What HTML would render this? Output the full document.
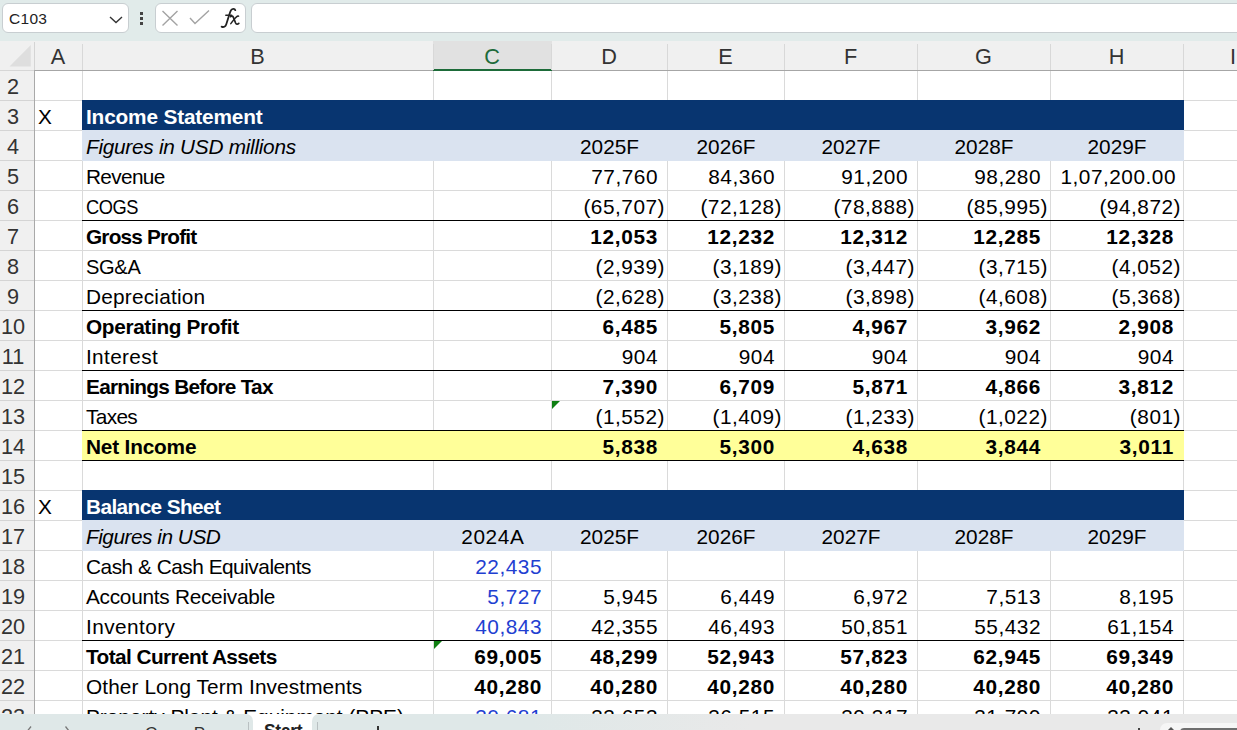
<!DOCTYPE html>
<html><head><meta charset="utf-8"><style>
*{margin:0;padding:0;box-sizing:border-box}
html,body{width:1237px;height:730px;overflow:hidden;background:#fff}
body{position:relative;font-family:"Liberation Sans",sans-serif;color:#000}
.a{position:absolute}
.t{position:absolute;white-space:nowrap;font-size:20.8px;line-height:30px;height:30px}
.n{letter-spacing:0.52px}
.nb{letter-spacing:0.7px}
.r{text-align:right}
.c{text-align:center}
.b{font-weight:bold}
.i{font-style:italic}
.hl{position:absolute;height:1px;background:#dadada}
.vl{position:absolute;width:1px;background:#dadada}
.bl{position:absolute;height:1px;background:#000}
.hd{position:absolute;font-size:21.7px;color:#333;text-align:center;line-height:29px;top:41.5px;height:29px}
.rh{position:absolute;font-size:21.7px;color:#333;text-align:center;left:0;width:26px;line-height:30px;height:30px;margin-top:1.5px}
</style></head><body>
<div class="hl" style="left:35px;top:100px;width:1202px"></div>
<div class="hl" style="left:35px;top:130px;width:1202px"></div>
<div class="hl" style="left:35px;top:160px;width:1202px"></div>
<div class="hl" style="left:35px;top:190px;width:1202px"></div>
<div class="hl" style="left:35px;top:220px;width:1202px"></div>
<div class="hl" style="left:35px;top:250px;width:1202px"></div>
<div class="hl" style="left:35px;top:280px;width:1202px"></div>
<div class="hl" style="left:35px;top:310px;width:1202px"></div>
<div class="hl" style="left:35px;top:340px;width:1202px"></div>
<div class="hl" style="left:35px;top:370px;width:1202px"></div>
<div class="hl" style="left:35px;top:400px;width:1202px"></div>
<div class="hl" style="left:35px;top:430px;width:1202px"></div>
<div class="hl" style="left:35px;top:460px;width:1202px"></div>
<div class="hl" style="left:35px;top:490px;width:1202px"></div>
<div class="hl" style="left:35px;top:520px;width:1202px"></div>
<div class="hl" style="left:35px;top:550px;width:1202px"></div>
<div class="hl" style="left:35px;top:580px;width:1202px"></div>
<div class="hl" style="left:35px;top:610px;width:1202px"></div>
<div class="hl" style="left:35px;top:640px;width:1202px"></div>
<div class="hl" style="left:35px;top:670px;width:1202px"></div>
<div class="hl" style="left:35px;top:700px;width:1202px"></div>
<div class="hl" style="left:35px;top:730px;width:1202px"></div>
<div class="vl" style="left:82px;top:71px;height:643px"></div>
<div class="vl" style="left:433px;top:71px;height:643px"></div>
<div class="vl" style="left:551px;top:71px;height:643px"></div>
<div class="vl" style="left:667px;top:71px;height:643px"></div>
<div class="vl" style="left:784px;top:71px;height:643px"></div>
<div class="vl" style="left:917px;top:71px;height:643px"></div>
<div class="vl" style="left:1050px;top:71px;height:643px"></div>
<div class="vl" style="left:1183px;top:71px;height:643px"></div>
<div class="a" style="left:82px;top:100px;width:1102px;height:31px;background:#083570"></div>
<div class="a" style="left:82px;top:130px;width:1102px;height:31px;background:#dae3f0"></div>
<div class="a" style="left:82px;top:430px;width:1102px;height:31px;background:#ffff99"></div>
<div class="a" style="left:82px;top:490px;width:1102px;height:31px;background:#083570"></div>
<div class="a" style="left:82px;top:520px;width:1102px;height:31px;background:#dae3f0"></div>
<div class="bl" style="left:82px;top:220px;width:1102px"></div>
<div class="bl" style="left:82px;top:310px;width:1102px"></div>
<div class="bl" style="left:82px;top:370px;width:1102px"></div>
<div class="bl" style="left:82px;top:430px;width:1102px"></div>
<div class="bl" style="left:82px;top:460px;width:1102px"></div>
<div class="bl" style="left:82px;top:640px;width:1102px"></div>
<div class="t " style="left:38px;top:102px;">X</div>
<div class="t b" style="left:86px;top:102px;letter-spacing:-0.160px;color:#fff;">Income Statement</div>
<div class="t i" style="left:86px;top:132px;letter-spacing:-0.273px;">Figures in USD millions</div>
<div class="t c " style="left:552px;width:115px;top:132px;">2025F</div>
<div class="t c " style="left:668px;width:116px;top:132px;">2026F</div>
<div class="t c " style="left:785px;width:132px;top:132px;">2027F</div>
<div class="t c " style="left:918px;width:132px;top:132px;">2028F</div>
<div class="t c " style="left:1051px;width:132px;top:132px;">2029F</div>
<div class="t " style="left:86px;top:162px;letter-spacing:-0.667px;">Revenue</div>
<div class="t r n " style="left:552px;width:106px;top:162px;">77,760</div>
<div class="t r n " style="left:668px;width:107px;top:162px;">84,360</div>
<div class="t r n " style="left:785px;width:123px;top:162px;">91,200</div>
<div class="t r n " style="left:918px;width:123px;top:162px;">98,280</div>
<div class="t r n " style="left:1051px;width:125px;top:162px;">1,07,200.00</div>
<div class="t " style="left:86px;top:192px;letter-spacing:-0.467px;transform:scaleX(0.878);transform-origin:0 0;">COGS</div>
<div class="t r n " style="left:552px;width:113px;top:192px;">(65,707)</div>
<div class="t r n " style="left:668px;width:114px;top:192px;">(72,128)</div>
<div class="t r n " style="left:785px;width:130px;top:192px;">(78,888)</div>
<div class="t r n " style="left:918px;width:130px;top:192px;">(85,995)</div>
<div class="t r n " style="left:1051px;width:130px;top:192px;">(94,872)</div>
<div class="t b" style="left:86px;top:222px;letter-spacing:-0.818px;">Gross Profit</div>
<div class="t r nb b" style="left:552px;width:106px;top:222px;">12,053</div>
<div class="t r nb b" style="left:668px;width:107px;top:222px;">12,232</div>
<div class="t r nb b" style="left:785px;width:123px;top:222px;">12,312</div>
<div class="t r nb b" style="left:918px;width:123px;top:222px;">12,285</div>
<div class="t r nb b" style="left:1051px;width:123px;top:222px;">12,328</div>
<div class="t " style="left:86px;top:252px;letter-spacing:-0.333px;transform:scaleX(0.965);transform-origin:0 0;">SG&amp;A</div>
<div class="t r n " style="left:552px;width:113px;top:252px;">(2,939)</div>
<div class="t r n " style="left:668px;width:114px;top:252px;">(3,189)</div>
<div class="t r n " style="left:785px;width:130px;top:252px;">(3,447)</div>
<div class="t r n " style="left:918px;width:130px;top:252px;">(3,715)</div>
<div class="t r n " style="left:1051px;width:130px;top:252px;">(4,052)</div>
<div class="t " style="left:86px;top:282px;letter-spacing:0.218px;">Depreciation</div>
<div class="t r n " style="left:552px;width:113px;top:282px;">(2,628)</div>
<div class="t r n " style="left:668px;width:114px;top:282px;">(3,238)</div>
<div class="t r n " style="left:785px;width:130px;top:282px;">(3,898)</div>
<div class="t r n " style="left:918px;width:130px;top:282px;">(4,608)</div>
<div class="t r n " style="left:1051px;width:130px;top:282px;">(5,368)</div>
<div class="t b" style="left:86px;top:312px;letter-spacing:-0.347px;">Operating Profit</div>
<div class="t r nb b" style="left:552px;width:106px;top:312px;">6,485</div>
<div class="t r nb b" style="left:668px;width:107px;top:312px;">5,805</div>
<div class="t r nb b" style="left:785px;width:123px;top:312px;">4,967</div>
<div class="t r nb b" style="left:918px;width:123px;top:312px;">3,962</div>
<div class="t r nb b" style="left:1051px;width:123px;top:312px;">2,908</div>
<div class="t " style="left:86px;top:342px;letter-spacing:0.343px;">Interest</div>
<div class="t r n " style="left:552px;width:106px;top:342px;">904</div>
<div class="t r n " style="left:668px;width:107px;top:342px;">904</div>
<div class="t r n " style="left:785px;width:123px;top:342px;">904</div>
<div class="t r n " style="left:918px;width:123px;top:342px;">904</div>
<div class="t r n " style="left:1051px;width:123px;top:342px;">904</div>
<div class="t b" style="left:86px;top:372px;letter-spacing:-0.733px;">Earnings Before Tax</div>
<div class="t r nb b" style="left:552px;width:106px;top:372px;">7,390</div>
<div class="t r nb b" style="left:668px;width:107px;top:372px;">6,709</div>
<div class="t r nb b" style="left:785px;width:123px;top:372px;">5,871</div>
<div class="t r nb b" style="left:918px;width:123px;top:372px;">4,866</div>
<div class="t r nb b" style="left:1051px;width:123px;top:372px;">3,812</div>
<div class="t " style="left:86px;top:402px;letter-spacing:-0.650px;">Taxes</div>
<div class="t r n " style="left:552px;width:113px;top:402px;">(1,552)</div>
<div class="t r n " style="left:668px;width:114px;top:402px;">(1,409)</div>
<div class="t r n " style="left:785px;width:130px;top:402px;">(1,233)</div>
<div class="t r n " style="left:918px;width:130px;top:402px;">(1,022)</div>
<div class="t r n " style="left:1051px;width:130px;top:402px;">(801)</div>
<div class="t b" style="left:86px;top:432px;letter-spacing:-0.178px;">Net Income</div>
<div class="t r nb b" style="left:552px;width:106px;top:432px;">5,838</div>
<div class="t r nb b" style="left:668px;width:107px;top:432px;">5,300</div>
<div class="t r nb b" style="left:785px;width:123px;top:432px;">4,638</div>
<div class="t r nb b" style="left:918px;width:123px;top:432px;">3,844</div>
<div class="t r nb b" style="left:1051px;width:123px;top:432px;">3,011</div>
<div class="t " style="left:38px;top:492px;">X</div>
<div class="t b" style="left:86px;top:492px;letter-spacing:-0.600px;color:#fff;">Balance Sheet</div>
<div class="t i" style="left:86px;top:522px;letter-spacing:-0.477px;">Figures in USD</div>
<div class="t c " style="left:434px;width:117px;top:522px;letter-spacing:0.6px;text-indent:0.6px">2024A</div>
<div class="t c " style="left:552px;width:115px;top:522px;">2025F</div>
<div class="t c " style="left:668px;width:116px;top:522px;">2026F</div>
<div class="t c " style="left:785px;width:132px;top:522px;">2027F</div>
<div class="t c " style="left:918px;width:132px;top:522px;">2028F</div>
<div class="t c " style="left:1051px;width:132px;top:522px;">2029F</div>
<div class="t " style="left:86px;top:552px;letter-spacing:-0.473px;">Cash &amp; Cash Equivalents</div>
<div class="t r n " style="left:434px;width:108px;top:552px;color:#1f3fd1;">22,435</div>
<div class="t " style="left:86px;top:582px;letter-spacing:-0.267px;">Accounts Receivable</div>
<div class="t r n " style="left:434px;width:108px;top:582px;color:#1f3fd1;">5,727</div>
<div class="t r n " style="left:552px;width:106px;top:582px;">5,945</div>
<div class="t r n " style="left:668px;width:107px;top:582px;">6,449</div>
<div class="t r n " style="left:785px;width:123px;top:582px;">6,972</div>
<div class="t r n " style="left:918px;width:123px;top:582px;">7,513</div>
<div class="t r n " style="left:1051px;width:123px;top:582px;">8,195</div>
<div class="t " style="left:86px;top:612px;letter-spacing:0.425px;">Inventory</div>
<div class="t r n " style="left:434px;width:108px;top:612px;color:#1f3fd1;">40,843</div>
<div class="t r n " style="left:552px;width:106px;top:612px;">42,355</div>
<div class="t r n " style="left:668px;width:107px;top:612px;">46,493</div>
<div class="t r n " style="left:785px;width:123px;top:612px;">50,851</div>
<div class="t r n " style="left:918px;width:123px;top:612px;">55,432</div>
<div class="t r n " style="left:1051px;width:123px;top:612px;">61,154</div>
<div class="t b" style="left:86px;top:642px;letter-spacing:-0.579px;">Total Current Assets</div>
<div class="t r nb b" style="left:434px;width:108px;top:642px;">69,005</div>
<div class="t r nb b" style="left:552px;width:106px;top:642px;">48,299</div>
<div class="t r nb b" style="left:668px;width:107px;top:642px;">52,943</div>
<div class="t r nb b" style="left:785px;width:123px;top:642px;">57,823</div>
<div class="t r nb b" style="left:918px;width:123px;top:642px;">62,945</div>
<div class="t r nb b" style="left:1051px;width:123px;top:642px;">69,349</div>
<div class="t " style="left:86px;top:672px;letter-spacing:0.100px;">Other Long Term Investments</div>
<div class="t r nb b" style="left:434px;width:108px;top:672px;">40,280</div>
<div class="t r nb b" style="left:552px;width:106px;top:672px;">40,280</div>
<div class="t r nb b" style="left:668px;width:107px;top:672px;">40,280</div>
<div class="t r nb b" style="left:785px;width:123px;top:672px;">40,280</div>
<div class="t r nb b" style="left:918px;width:123px;top:672px;">40,280</div>
<div class="t r nb b" style="left:1051px;width:123px;top:672px;">40,280</div>
<div class="t " style="left:86px;top:702px;letter-spacing:0.000px;">Property Plant &amp; Equipment (PPE)</div>
<div class="t r n " style="left:434px;width:108px;top:702px;color:#1f3fd1;">30,681</div>
<div class="t r n " style="left:552px;width:106px;top:702px;">33,653</div>
<div class="t r n " style="left:668px;width:107px;top:702px;">36,515</div>
<div class="t r n " style="left:785px;width:123px;top:702px;">39,317</div>
<div class="t r n " style="left:918px;width:123px;top:702px;">31,799</div>
<div class="t r n " style="left:1051px;width:123px;top:702px;">33,941</div>
<svg class="a" style="left:552px;top:401px" width="9" height="9"><path d="M0 0H8L0 8Z" fill="#0f7f12"/></svg>
<svg class="a" style="left:434px;top:641px" width="9" height="9"><path d="M0 0H8L0 8Z" fill="#0f7f12"/></svg>
<div class="a" style="left:0;top:41px;width:1237px;height:29px;background:#f0f0f0"></div>
<div class="a" style="left:34px;top:70px;width:1203px;height:1px;background:#a6a6a6"></div>
<div class="a" style="left:0;top:70px;width:34px;height:1px;background:#d0d0d0"></div>
<div class="a" style="left:433px;top:41px;width:119px;height:29px;background:#e1e1e1"></div>
<div class="a" style="left:433px;top:69px;width:119px;height:2px;background:#1d6b39"></div>
<div class="a" style="left:82px;top:44px;width:1px;height:26px;background:#d8d8d8"></div>
<div class="a" style="left:433px;top:44px;width:1px;height:26px;background:#d8d8d8"></div>
<div class="a" style="left:551px;top:44px;width:1px;height:26px;background:#d8d8d8"></div>
<div class="a" style="left:667px;top:44px;width:1px;height:26px;background:#d8d8d8"></div>
<div class="a" style="left:784px;top:44px;width:1px;height:26px;background:#d8d8d8"></div>
<div class="a" style="left:917px;top:44px;width:1px;height:26px;background:#d8d8d8"></div>
<div class="a" style="left:1050px;top:44px;width:1px;height:26px;background:#d8d8d8"></div>
<div class="a" style="left:1183px;top:44px;width:1px;height:26px;background:#d8d8d8"></div>
<div class="hd" style="left:34px;width:48px;color:#333">A</div>
<div class="hd" style="left:82px;width:351px;color:#333">B</div>
<div class="hd" style="left:433px;width:118px;color:#1e6b3b">C</div>
<div class="hd" style="left:551px;width:116px;color:#333">D</div>
<div class="hd" style="left:667px;width:117px;color:#333">E</div>
<div class="hd" style="left:784px;width:133px;color:#333">F</div>
<div class="hd" style="left:917px;width:133px;color:#333">G</div>
<div class="hd" style="left:1050px;width:133px;color:#333">H</div>
<div class="hd" style="left:1183px;width:100px">I</div>
<svg class="a" style="left:0;top:41px" width="34" height="29"><path d="M9.5 25.6H30.8V3.9Z" fill="#dedede"/></svg>
<div class="a" style="left:0;top:70px;width:34px;height:644px;background:#f0f0f0"></div>
<div class="a" style="left:34px;top:70px;width:1px;height:644px;background:#a9a9a9"></div>
<div class="a" style="left:34px;top:42px;width:1px;height:28px;background:#d4d4d4"></div>
<div class="a" style="left:0;top:70px;width:34px;height:1px;background:#d6d6d6"></div>
<div class="a" style="left:0;top:100px;width:34px;height:1px;background:#d4d4d4"></div>
<div class="rh" style="top:70px">2</div>
<div class="a" style="left:0;top:130px;width:34px;height:1px;background:#d4d4d4"></div>
<div class="rh" style="top:100px">3</div>
<div class="a" style="left:0;top:160px;width:34px;height:1px;background:#d4d4d4"></div>
<div class="rh" style="top:130px">4</div>
<div class="a" style="left:0;top:190px;width:34px;height:1px;background:#d4d4d4"></div>
<div class="rh" style="top:160px">5</div>
<div class="a" style="left:0;top:220px;width:34px;height:1px;background:#d4d4d4"></div>
<div class="rh" style="top:190px">6</div>
<div class="a" style="left:0;top:250px;width:34px;height:1px;background:#d4d4d4"></div>
<div class="rh" style="top:220px">7</div>
<div class="a" style="left:0;top:280px;width:34px;height:1px;background:#d4d4d4"></div>
<div class="rh" style="top:250px">8</div>
<div class="a" style="left:0;top:310px;width:34px;height:1px;background:#d4d4d4"></div>
<div class="rh" style="top:280px">9</div>
<div class="a" style="left:0;top:340px;width:34px;height:1px;background:#d4d4d4"></div>
<div class="rh" style="top:310px">10</div>
<div class="a" style="left:0;top:370px;width:34px;height:1px;background:#d4d4d4"></div>
<div class="rh" style="top:340px">11</div>
<div class="a" style="left:0;top:400px;width:34px;height:1px;background:#d4d4d4"></div>
<div class="rh" style="top:370px">12</div>
<div class="a" style="left:0;top:430px;width:34px;height:1px;background:#d4d4d4"></div>
<div class="rh" style="top:400px">13</div>
<div class="a" style="left:0;top:460px;width:34px;height:1px;background:#d4d4d4"></div>
<div class="rh" style="top:430px">14</div>
<div class="a" style="left:0;top:490px;width:34px;height:1px;background:#d4d4d4"></div>
<div class="rh" style="top:460px">15</div>
<div class="a" style="left:0;top:520px;width:34px;height:1px;background:#d4d4d4"></div>
<div class="rh" style="top:490px">16</div>
<div class="a" style="left:0;top:550px;width:34px;height:1px;background:#d4d4d4"></div>
<div class="rh" style="top:520px">17</div>
<div class="a" style="left:0;top:580px;width:34px;height:1px;background:#d4d4d4"></div>
<div class="rh" style="top:550px">18</div>
<div class="a" style="left:0;top:610px;width:34px;height:1px;background:#d4d4d4"></div>
<div class="rh" style="top:580px">19</div>
<div class="a" style="left:0;top:640px;width:34px;height:1px;background:#d4d4d4"></div>
<div class="rh" style="top:610px">20</div>
<div class="a" style="left:0;top:670px;width:34px;height:1px;background:#d4d4d4"></div>
<div class="rh" style="top:640px">21</div>
<div class="a" style="left:0;top:700px;width:34px;height:1px;background:#d4d4d4"></div>
<div class="rh" style="top:670px">22</div>
<div class="a" style="left:0;top:730px;width:34px;height:1px;background:#d4d4d4"></div>
<div class="rh" style="top:700px">23</div>
<div class="a" style="left:0;top:0;width:1237px;height:41px;background:#e1ebea"></div>
<div class="a" style="left:2px;top:3px;width:127px;height:30px;background:#fff;border:1px solid #c8ced1;border-radius:6px"></div>
<div class="a" style="left:9px;top:4px;line-height:30px;font-size:15.5px;color:#222;letter-spacing:0.3px">C103</div>
<svg class="a" style="left:108px;top:15px" width="16" height="10"><path d="M2 2L8 7.5L14 2" stroke="#333" stroke-width="1.4" fill="none"/></svg>
<div class="a" style="left:140px;top:12px;width:3px;height:3px;background:#444"></div>
<div class="a" style="left:140px;top:17px;width:3px;height:3px;background:#444"></div>
<div class="a" style="left:140px;top:22px;width:3px;height:3px;background:#444"></div>
<div class="a" style="left:155px;top:3px;width:91px;height:30px;background:#fff;border:1px solid #c8ced1;border-radius:6px"></div>
<svg class="a" style="left:160px;top:9px" width="20" height="20"><path d="M2.5 2L17.5 16.5M17.5 2L2.5 16.5" stroke="#a3a3a3" stroke-width="1.4" fill="none"/></svg>
<svg class="a" style="left:188px;top:9px" width="24" height="18"><path d="M2 9L7 14.5L21 1.5" stroke="#a3a3a3" stroke-width="1.4" fill="none"/></svg>
<svg class="a" style="left:215px;top:4px" width="30" height="28"><g fill="none" stroke="#222" stroke-linecap="round"><path stroke-width="1.8" d="M20.3 6.2C19.8 4.6 17.4 4.4 16 6.2C15.2 7.4 14.8 9 14.2 11L11.2 20.5C10.5 22.6 8.6 23.6 6.6 22.6"/><path stroke-width="1.5" d="M10.8 11.3H16.6"/><path stroke-width="1.7" d="M15.6 12.6C16.6 11.8 17.8 11.8 18.4 13.4L20.6 19C21.2 20.4 22.6 20.6 23.8 19.4"/><path stroke-width="1.5" d="M23.6 12.2C22.4 11.6 21.2 12.6 15.8 19.6"/></g></svg>
<div class="a" style="left:251px;top:3px;width:1000px;height:30px;background:#fff;border:1px solid #c8ced1;border-radius:6px"></div>
<div class="a" style="left:0;top:714px;width:1237px;height:16px;overflow:hidden;background:#fff"><div class="a" style="left:0;top:0;width:253px;height:20px;background:#dfe8e8;border-top-right-radius:7px"></div><div class="a" style="left:248px;top:8px;width:1px;height:10px;background:#b9c0c2"></div><div class="a" style="left:312px;top:0;width:925px;height:20px;background:linear-gradient(90deg,#dfe8e8 0,#dfe8e8 220px,#e9e9e9 440px,#e9e9e9 100%);border-top-left-radius:7px"></div><div class="a" style="left:317px;top:8px;width:1px;height:10px;background:#b9c0c2"></div><svg class="a" style="left:24px;top:11px" width="50" height="8"><path d="M7 1.5L3.5 6M63 0" stroke="#777" stroke-width="1.3" fill="none"/><path d="M41.5 1.5L45 6" stroke="#777" stroke-width="1.3" fill="none"/></svg><div class="a" style="left:145px;top:9px;font-size:17px;line-height:22px;color:#333;letter-spacing:-0.2px">Cover Page</div><div class="a" style="left:264px;top:6px;font-size:17.5px;line-height:22px;font-weight:bold;color:#222;letter-spacing:-0.3px">Start</div><div class="a" style="left:377px;top:12px;width:2px;height:8px;background:#333"></div><div class="a" style="left:1138px;top:14px;width:2px;height:6px;background:#444"></div><div class="a" style="left:1160px;top:9px;width:90px;height:20px;background:#f6f6f6;border-radius:7px"></div><svg class="a" style="left:1166px;top:12px" width="10" height="8"><path d="M5 1L1 5H9Z" fill="#555"/></svg><div class="a" style="left:1180px;top:14px;width:70px;height:10px;background:#6e6e6e;border-radius:4px"></div></div>
</body></html>
